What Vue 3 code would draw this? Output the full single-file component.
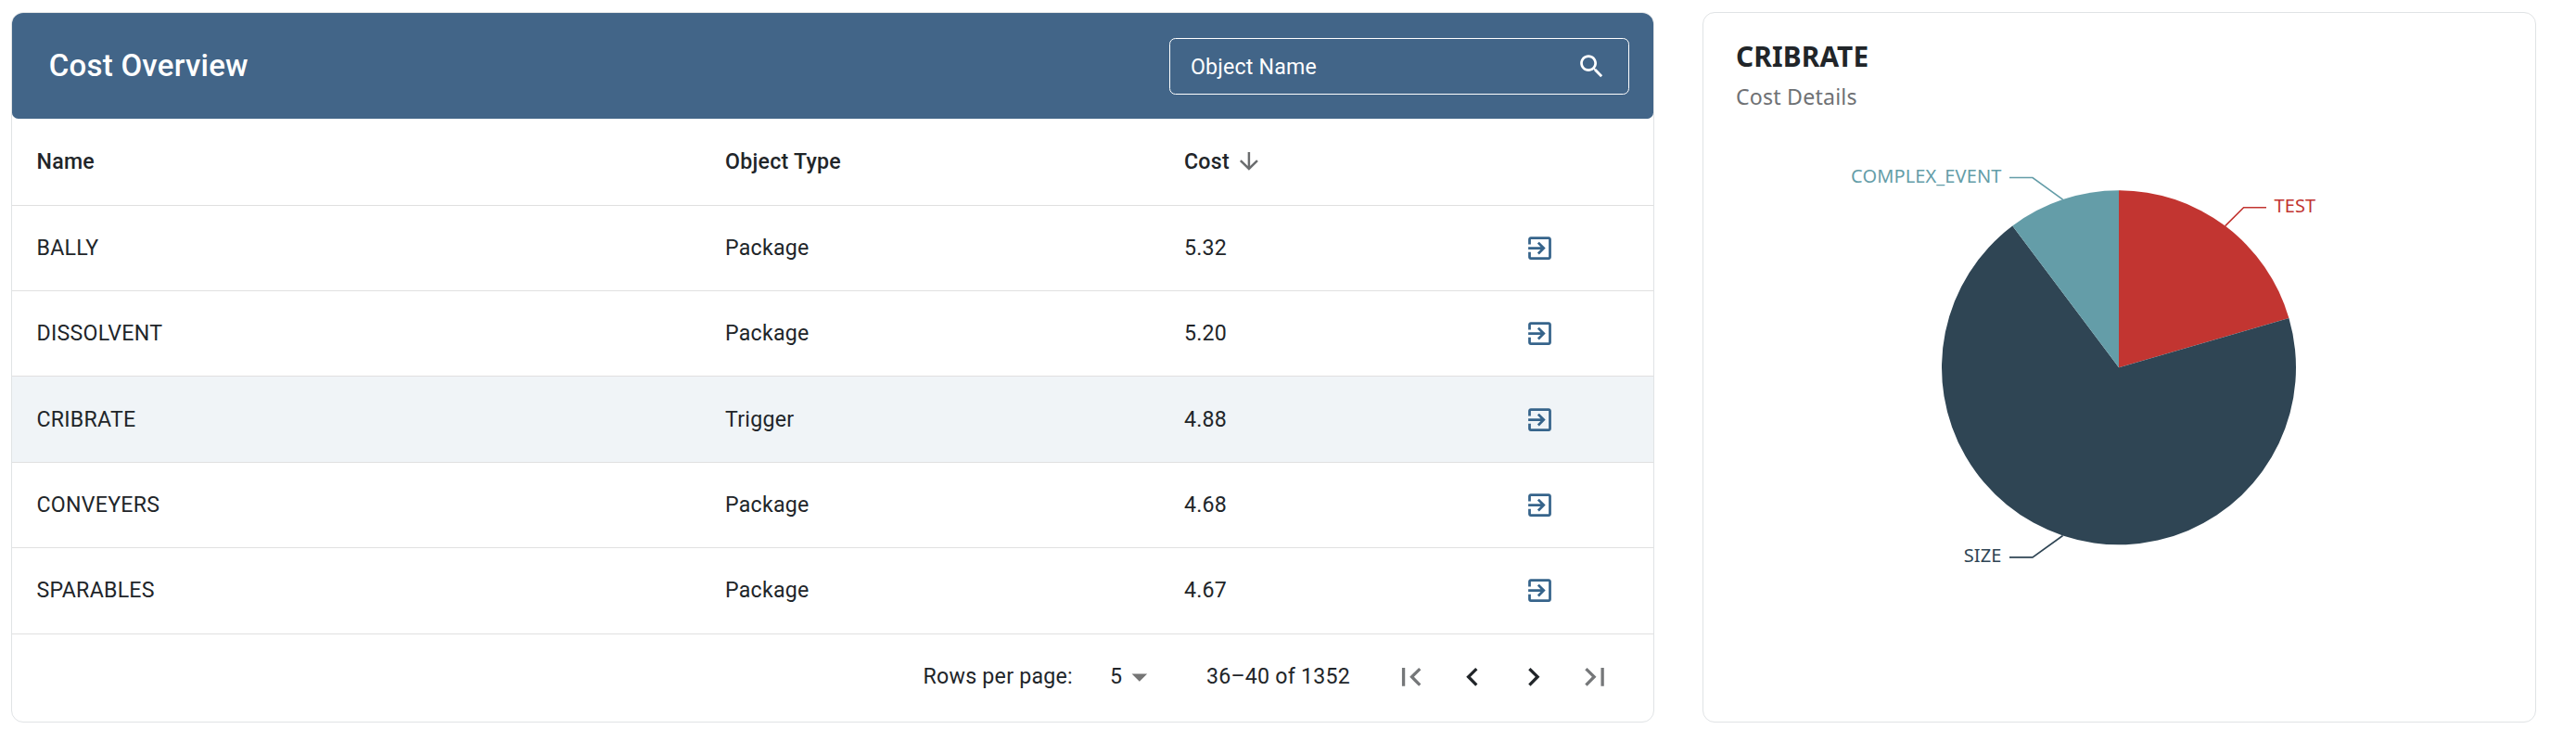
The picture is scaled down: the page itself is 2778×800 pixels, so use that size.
<script setup>
const rows = [
  { name: 'BALLY', type: 'Package', cost: '5.32' },
  { name: 'DISSOLVENT', type: 'Package', cost: '5.20' },
  { name: 'CRIBRATE', type: 'Trigger', cost: '4.88', selected: true },
  { name: 'CONVEYERS', type: 'Package', cost: '4.68' },
  { name: 'SPARABLES', type: 'Package', cost: '4.67' },
]

const pager = [
  { label: 'First page', muted: true, d: 'M18.41 16.59L13.82 12l4.59-4.59L17 6l-6 6 6 6zM6 6h2v12H6z' },
  { label: 'Previous page', muted: false, d: 'M15.41 7.41L14 6l-6 6 6 6 1.41-1.41L10.83 12z' },
  { label: 'Next page', muted: false, d: 'M10 6L8.59 7.41 13.17 12l-4.58 4.59L10 18l6-6z' },
  { label: 'Last page', muted: true, d: 'M5.59 7.41L10.18 12l-4.59 4.59L7 18l6-6-6-6zM16 6h2v12h-2z' },
]

// Pie geometry, in the coordinates of the chart's viewBox
const cx = 448
const cy = 258.3
const r = 191
const point = (deg) => {
  const a = (deg * Math.PI) / 180
  return [cx + r * Math.sin(a), cy - r * Math.cos(a)]
}
const slices = [
  { name: 'TEST', from: 0, to: 73.8, color: '#c23531', elbow: [582.6, 85.7], end: 607, tx: 615.5, ty: 91, anchor: 'start' },
  { name: 'SIZE', from: 73.8, to: 323.1, color: '#2f4554', elbow: [355, 462.8], end: 330, tx: 321.5, ty: 467.7, anchor: 'end' },
  { name: 'COMPLEX_EVENT', from: 323.1, to: 360, color: '#649da8', elbow: [355, 53.5], end: 330, tx: 321.5, ty: 59, anchor: 'end' },
].map((s) => {
  const [x1, y1] = point(s.from)
  const [x2, y2] = point(s.to)
  const [mx, my] = point((s.from + s.to) / 2)
  return {
    ...s,
    path: `M${cx} ${cy}L${x1} ${y1}A${r} ${r} 0 ${s.to - s.from > 180 ? 1 : 0} 1 ${x2} ${y2}Z`,
    leader: `${mx},${my} ${s.elbow[0]},${s.elbow[1]} ${s.end},${s.elbow[1]}`,
  }
})
</script>

<template>
  <main class="page">
    <section class="card overview">
      <header class="toolbar">
        <h1>Cost Overview</h1>
        <div class="search">
          <span>Object Name</span>
          <svg viewBox="0 0 24 24" width="33" height="33"><path d="M15.5 14h-.79l-.28-.27C15.41 12.59 16 11.11 16 9.5 16 5.91 13.09 3 9.5 3S3 5.91 3 9.5 5.91 16 9.5 16c1.61 0 3.09-.59 4.23-1.57l.27.28v.79l5 4.99L20.49 19l-4.99-5zm-6 0C7.01 14 5 11.99 5 9.5S7.01 5 9.5 5 14 7.01 14 9.5 11.99 14 9.5 14z" /></svg>
        </div>
      </header>
      <div class="row head">
        <span>Name</span>
        <span>Object Type</span>
        <span class="sort">Cost
          <svg viewBox="0 0 24 24" width="29.8" height="29.8"><path d="M20 12l-1.41-1.41L13 16.17V4h-2v12.17l-5.58-5.59L4 12l8 8 8-8z" /></svg>
        </span>
        <span></span>
      </div>
      <div v-for="row in rows" :key="row.name" class="row" :class="{ selected: row.selected }">
        <span>{{ row.name }}</span>
        <span>{{ row.type }}</span>
        <span>{{ row.cost }}</span>
        <svg class="open" viewBox="0 0 24 24" width="33" height="33"><path d="M10.09 15.59L11.5 17l5-5-5-5-1.41 1.41L12.67 11H3v2h9.67l-2.58 2.59zM19 3H5c-1.11 0-2 .9-2 2v4h2V5h14v14H5v-4H3v4c0 1.1.89 2 2 2h14c1.1 0 2-.9 2-2V5c0-1.1-.9-2-2-2z" /></svg>
      </div>
      <footer class="footer">
        <span class="label">Rows per page:</span>
        <span class="size">5<svg viewBox="0 0 24 24" width="39.7" height="39.7"><path d="M7 10l5 5 5-5z" /></svg></span>
        <span class="range">36–40 of 1352</span>
        <div class="pager">
          <svg v-for="p in pager" :key="p.label" :aria-label="p.label" :class="{ muted: p.muted }" viewBox="0 0 24 24" width="39.7" height="39.7"><path :d="p.d" /></svg>
        </div>
      </footer>
    </section>

    <section class="card details">
      <h2>CRIBRATE</h2>
      <p>Cost Details</p>
      <svg class="chart" viewBox="0 0 897 540" width="897" height="540">
        <path v-for="s in slices" :key="s.name" :d="s.path" :fill="s.color" />
        <g v-for="s in slices" :key="s.name">
          <polyline :points="s.leader" :stroke="s.color" fill="none" stroke-width="1.65" />
          <text :x="s.tx" :y="s.ty" :fill="s.color" :text-anchor="s.anchor">{{ s.name }}</text>
        </g>
      </svg>
    </section>
  </main>
</template>

<style>
body {
  background: #fff;
}
</style>

<style scoped>
.page {
  box-sizing: border-box;
  width: 2778px;
  height: 800px;
  padding: 13px 43px 21px 12px;
  display: grid;
  grid-template-columns: 1772px 899px;
  column-gap: 52px;
  background: #fff;
  color: #212529;
  font-family: Roboto, "Liberation Sans", sans-serif;
  font-size: 23.15px;
}
.card {
  box-sizing: border-box;
  height: 766px;
  border: 1px solid #e0e3e5;
  border-radius: 13px;
  overflow: hidden;
  background: #fff;
}
.toolbar {
  box-sizing: border-box;
  height: 114px;
  padding: 0 26.5px 0 39.7px;
  display: flex;
  align-items: center;
  justify-content: space-between;
  background: #426588;
  border-radius: 0 0 6.6px 6.6px;
  color: #fff;
}
h1 {
  margin: 0;
  font-size: 33px;
  font-weight: 500;
  line-height: 52px;
  letter-spacing: 0.25px;
}
.search {
  box-sizing: border-box;
  width: 496px;
  height: 61px;
  padding: 0 22.5px;
  display: flex;
  align-items: center;
  justify-content: space-between;
  border: 1px solid #fff;
  border-radius: 6.6px;
  letter-spacing: 0.2px;
}
.search span {
  padding-top: 2px;
}
svg {
  display: block;
  flex: none;
  fill: currentColor;
}
.row {
  box-sizing: border-box;
  height: 92.4px;
  padding-left: 26.5px;
  display: grid;
  grid-template-columns: 742.5px 495px 367.2px 1fr;
  align-items: center;
  border-bottom: 1px solid #e0e0e0;
  letter-spacing: 0.25px;
}
.head {
  height: 93.6px;
  font-weight: 500;
}
.sort {
  display: flex;
  align-items: center;
  gap: 6.6px;
}
.sort svg {
  color: #6b6d6f;
}
.selected {
  background: #f0f4f7;
}
.open {
  color: #36648b;
}
.footer {
  height: 92.4px;
  padding-right: 30px;
  display: flex;
  align-items: center;
  justify-content: flex-end;
  letter-spacing: 0.25px;
}
.label {
  margin-right: 40px;
}
.size {
  display: flex;
  align-items: center;
  margin-right: 52px;
}
.size svg {
  margin-left: -1px;
  color: #757575;
}
.range {
  margin-right: 33px;
}
.pager {
  display: flex;
  padding: 0 13px;
  gap: 26.4px;
}
.muted {
  color: #757779;
}
.details {
  font-family: "Noto Sans", sans-serif;
}
h2 {
  margin: 26px 0 0 35px;
  font-size: 29.8px;
  line-height: 42px;
  font-weight: 700;
  letter-spacing: 0.15px;
}
p {
  margin: 5px 0 0 35px;
  font-size: 23.15px;
  line-height: 34px;
  color: #6f7174;
  letter-spacing: 0.2px;
}
.chart {
  margin-top: 17px;
  font-size: 20px;
  letter-spacing: 0.12px;
}
</style>
